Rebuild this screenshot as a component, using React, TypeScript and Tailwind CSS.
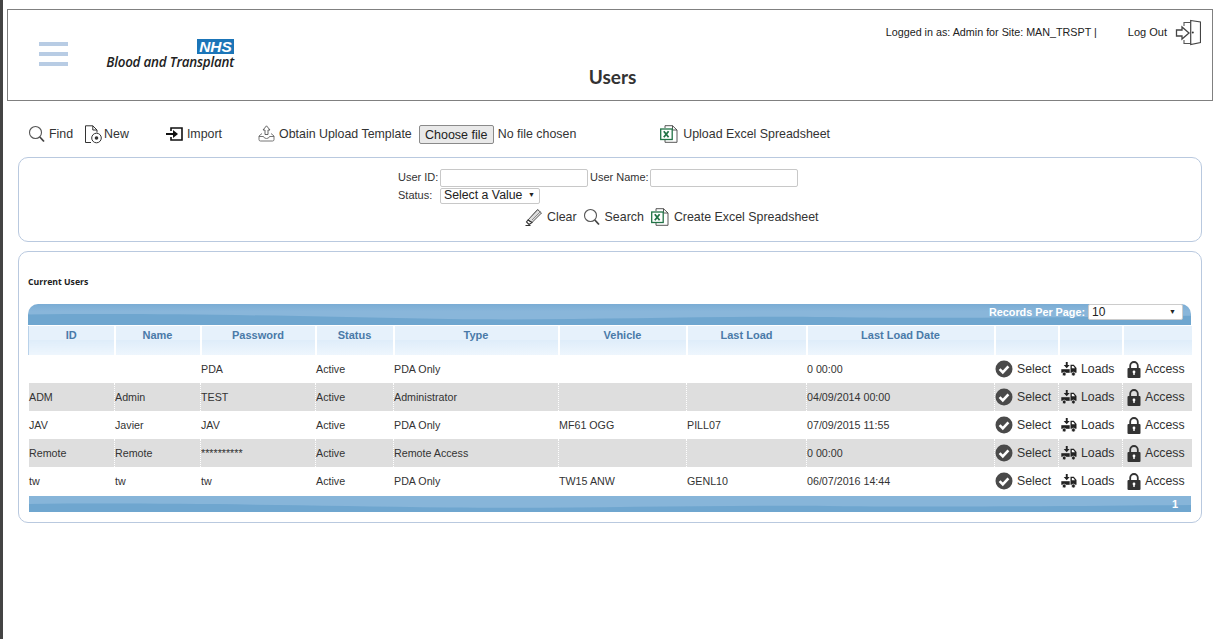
import type { ReactNode } from 'react';

const rows = [
  { id: '', name: '', password: 'PDA', status: 'Active', type: 'PDA Only', vehicle: '', load: '', date: '0 00:00' },
  { id: 'ADM', name: 'Admin', password: 'TEST', status: 'Active', type: 'Administrator', vehicle: '', load: '', date: '04/09/2014 00:00' },
  { id: 'JAV', name: 'Javier', password: 'JAV', status: 'Active', type: 'PDA Only', vehicle: 'MF61 OGG', load: 'PILL07', date: '07/09/2015 11:55' },
  { id: 'Remote', name: 'Remote', password: '**********', status: 'Active', type: 'Remote Access', vehicle: '', load: '', date: '0 00:00' },
  { id: 'tw', name: 'tw', password: 'tw', status: 'Active', type: 'PDA Only', vehicle: 'TW15 ANW', load: 'GENL10', date: '06/07/2016 14:44' },
];

const columns = [
  { label: 'ID', width: 'w-[86px]' },
  { label: 'Name', width: 'w-[86px]' },
  { label: 'Password', width: 'w-[115px]' },
  { label: 'Status', width: 'w-[78px]' },
  { label: 'Type', width: 'w-[165px]' },
  { label: 'Vehicle', width: 'w-[128px]' },
  { label: 'Last Load', width: 'w-[120px]' },
  { label: 'Last Load Date', width: 'w-[188px]' },
  { label: '', width: 'w-[64px]' },
  { label: '', width: 'w-[64px]' },
  { label: '', width: 'w-[69px]' },
];

function SearchIcon() {
  return (
    <svg width="18" height="18" viewBox="0 0 18 18" fill="none" className="shrink-0">
      <circle cx="7.5" cy="7.5" r="6" stroke="#555" strokeWidth="1.1" />
      <path d="M11.8 12 16 16.5" stroke="#444" strokeWidth="1.8" />
    </svg>
  );
}

function NewIcon() {
  return (
    <svg width="19" height="19" viewBox="0 0 19 19" fill="none" className="shrink-0">
      <path d="M7 17.5H1.5V.8h7.3L13 5v2.5M8.8.8V5H13" stroke="#333" strokeWidth="1" />
      <circle cx="12.5" cy="13" r="4.8" fill="#fff" stroke="#333" strokeWidth="1" />
      <circle cx="12.5" cy="13" r="1.8" fill="#333" />
    </svg>
  );
}

function ImportIcon() {
  return (
    <svg width="17" height="14" viewBox="0 0 17 14" fill="none" className="shrink-0">
      <path d="M5 4V1h11v12H5v-3" stroke="#111" strokeWidth="1.6" />
      <path d="M0 7h9" stroke="#111" strokeWidth="2" />
      <path d="M7 3v8l5-4z" fill="#111" />
    </svg>
  );
}

function UploadIcon() {
  return (
    <svg width="17" height="17" viewBox="0 0 17 17" fill="none" className="shrink-0">
      <path d="M8.5.8 12 5h-2v4.5H7V5H5z" stroke="#555" strokeWidth=".9" />
      <path d="M4 8.5 1 11v3.5q0 1.5 1.5 1.5h12q1.5 0 1.5-1.5V11l-3-2.5M1 11.5h4.5q.5 2 3 2t3-2H16" stroke="#666" strokeWidth=".9" />
    </svg>
  );
}

function ExcelIcon() {
  return (
    <svg width="18" height="18" viewBox="0 0 18 18" fill="none" className="shrink-0">
      <path d="M5 3V.7h7.5L17 5v12.3H5V15" stroke="#444" strokeWidth=".9" fill="#fff" />
      <path d="M12.5.7V5H17" stroke="#444" strokeWidth=".9" />
      <rect x=".7" y="4" width="11.5" height="10.5" fill="#fff" stroke="#217346" strokeWidth="1.3" />
      <path d="m3.8 6.3 4.8 6M8.6 6.3l-4.8 6" stroke="#217346" strokeWidth="1.8" />
    </svg>
  );
}

function ClearIcon() {
  return (
    <svg width="18" height="18" viewBox="0 0 18 18" fill="none" className="shrink-0">
      <path d="M3 12 12.5 1.5l4 3.5L7 14.5z" stroke="#555" strokeWidth="1" fill="#ddd" />
      <path d="m5 10 8-8.5M7 12l8.5-8.5" stroke="#777" strokeWidth=".8" />
      <path d="m3 12-1.5 2 2.5 2.5 3-2zM.5 17.5h5" stroke="#333" strokeWidth="1.1" />
    </svg>
  );
}

function LogOutIcon() {
  return (
    <svg width="26" height="27" viewBox="0 0 26 27" fill="none" className="shrink-0">
      <path d="M9 7V3.5h6.7M9 21v3.5h6.7" stroke="#555" strokeWidth="1.1" />
      <path d="M15.7 1.5 25.5 3v20.5l-9.8 2z" stroke="#444" strokeWidth="1.2" fill="#fff" />
      <path d="M1.5 11H7V8l7 6-7 6v-3H1.5z" stroke="#444" strokeWidth="1.3" fill="#fff" />
      <circle cx="17.8" cy="13.5" r="1" fill="#333" />
    </svg>
  );
}

function SelectIcon() {
  return (
    <svg width="18" height="18" viewBox="0 0 18 18" className="shrink-0">
      <circle cx="9" cy="9" r="8.5" fill="#4a4a4a" />
      <path d="m4.6 9.2 3.2 3.2 5.6-6" fill="none" stroke="#fff" strokeWidth="2.6" />
    </svg>
  );
}

function LoadsIcon() {
  return (
    <svg width="16" height="14" viewBox="0 0 16 14" className="shrink-0">
      <path d="M4.8 0h1.9v3h2L5.7 6.2 2.7 3h2.1z" fill="#222" />
      <path d="M.3 7.2h8.4v3.6H.3z" fill="#222" />
      <path d="M9.5 2.8h3.3L15.5 6v4.8h-6z" fill="#222" />
      <path d="M10.8 4h1.5l1.7 2.2h-3.2z" fill="#fff" />
      <circle cx="3.2" cy="12" r="1.9" fill="#222" stroke="#fff" strokeWidth=".6" />
      <circle cx="12.4" cy="12" r="1.9" fill="#222" stroke="#fff" strokeWidth=".6" />
    </svg>
  );
}

function LockIcon() {
  return (
    <svg width="14" height="17" viewBox="0 0 14 17" className="shrink-0">
      <path d="M3.2 8V4.8a3.8 3.8 0 0 1 7.6 0V8" fill="none" stroke="#333" strokeWidth="1.8" />
      <rect x=".5" y="7" width="13" height="10" rx="1" fill="#333" />
      <circle cx="7" cy="11" r="1.4" fill="#fff" />
      <rect x="6.3" y="11" width="1.4" height="3" fill="#fff" />
    </svg>
  );
}

function Wave({ height }: { height: number }) {
  return (
    <svg viewBox={`0 0 1163 ${height}`} preserveAspectRatio="none" className="absolute inset-0 h-full w-full">
      <path
        d={`M0 ${height * 0.5}C120 ${height * 0.42} 250 ${height * 0.55} 420 ${height * 0.72}C560 ${height * 0.8} 660 ${height * 0.55} 800 ${height * 0.62}C950 ${height * 0.72} 1060 ${height * 0.6} 1163 ${height * 0.56}V${height}H0z`}
        fill="#6fa6cf"
      />
    </svg>
  );
}

function ToolLink({ icon, children, className, gap }: { icon: ReactNode; children: ReactNode; className?: string; gap?: string }) {
  return (
    <span className={`flex items-center whitespace-nowrap ${gap ?? 'gap-[4px]'} ${className ?? ''}`}>
      {icon}
      <span>{children}</span>
    </span>
  );
}

function Action({ icon, label }: { icon: ReactNode; label: string }) {
  return (
    <span className="flex items-center gap-[4px] whitespace-nowrap text-[12.3px] text-[#333]">
      {icon}
      {label}
    </span>
  );
}

export default function App() {
  return (
    <div className="flex min-h-[639px] bg-white font-['Liberation_Sans',Arial,sans-serif] text-[#333]">
      <div className="w-[3px] shrink-0 bg-[#444]" />
      <div className="w-[1210px] shrink-0">
        <header className="ml-[4px] mt-[9px] h-[92px] w-[1206px] border border-[#808080]">
          <div className="flex h-[60px] items-start">
            <div className="ml-[31px] mt-[32px] flex w-[29px] flex-col gap-[6px]">
              <div className="h-[4px] bg-[#b8cce4]" />
              <div className="h-[4px] bg-[#b8cce4]" />
              <div className="h-[4px] bg-[#b8cce4]" />
            </div>
            <div className="ml-[38px] mt-[29px] flex w-[128px] flex-col items-end">
              <div className="h-[15px] w-[37px] bg-[#1b75b8] text-center text-[15.5px] font-bold italic leading-[15px] text-white">
                NHS
              </div>
              <div className="mt-[1px] whitespace-nowrap font-['Open_Sans',sans-serif] text-[13.4px] font-semibold italic leading-[14px] tracking-[-0.2px] text-[#222]">
                Blood and Transplant
              </div>
            </div>
            <div className="ml-auto mt-[15px] whitespace-nowrap text-[10.75px] leading-[14px] text-[#222]">
              Logged in as: Admin for Site: MAN_TRSPT |
            </div>
            <div className="ml-[31px] mt-[15px] whitespace-nowrap text-[11px] leading-[14px] text-[#222]">Log Out</div>
            <div className="ml-[8px] mr-[11px] mt-[9px]">
              <LogOutIcon />
            </div>
          </div>
          <h1 className="-mt-[3px] pl-[5px] text-center font-['Lato',sans-serif] text-[19px] font-bold leading-[20px] text-[#333]">
            Users
          </h1>
        </header>

        <div className="mt-[23px] flex h-[20px] items-center pl-[25px] text-[12.4px] text-[#333]">
          <ToolLink icon={<SearchIcon />} gap="gap-[3px]">Find</ToolLink>
          <ToolLink icon={<NewIcon />} className="ml-[11px]" gap="gap-[1px]">New</ToolLink>
          <ToolLink icon={<ImportIcon />} className="ml-[37px]">Import</ToolLink>
          <ToolLink icon={<UploadIcon />} className="ml-[36px]">Obtain Upload Template</ToolLink>
          <button className="ml-[7px] h-[19px] w-[75px] rounded-[2px] border border-[#8a8a8a] bg-[#e9e9e9] text-[12.5px] text-[#222]">
            Choose file
          </button>
          <span className="ml-[4px] whitespace-nowrap">No file chosen</span>
          <ToolLink icon={<ExcelIcon />} className="ml-[84px]" gap="gap-[5px]">Upload Excel Spreadsheet</ToolLink>
        </div>

        <section className="ml-[15px] mt-[13px] flex h-[85px] w-[1184px] flex-col rounded-[10px] border border-[#b9c9df] pl-[379px] pt-[10px] text-[11px]">
          <div className="flex h-[19px] items-center">
            <span className="w-[42px]">User ID:</span>
            <input className="h-[18px] w-[148px] rounded-[2px] border border-[#c8c8c8] bg-white" />
            <span className="ml-[2px] w-[60px] whitespace-nowrap">User Name:</span>
            <input className="h-[18px] w-[148px] rounded-[2px] border border-[#c8c8c8] bg-white" />
          </div>
          <div className="flex h-[17px] items-center">
            <span className="w-[42px]">Status:</span>
            <div className="flex h-[16px] w-[100px] items-center justify-between rounded-[2px] border border-[#c8c8c8] pl-[3px] pr-[4px] text-[12.3px] text-[#222]">
              Select a Value
              <span className="text-[7px]">▼</span>
            </div>
          </div>
          <div className="ml-[127px] mt-[3px] flex h-[20px] items-center whitespace-nowrap text-[12.4px]">
            <ToolLink icon={<ClearIcon />}>Clear</ToolLink>
            <ToolLink icon={<SearchIcon />} className="ml-[6px]">Search</ToolLink>
            <ToolLink icon={<ExcelIcon />} className="ml-[7px]" gap="gap-[5px]">Create Excel Spreadsheet</ToolLink>
          </div>
        </section>

        <section className="ml-[15px] mt-[9px] h-[272px] w-[1184px] rounded-[10px] border border-[#b9c9df] pl-[9px] pt-[24px]">
          <h2 className="font-['Open_Sans',sans-serif] text-[8.7px] font-bold leading-[12px] text-[#222]">Current Users</h2>
          <div className="relative mt-[16px] flex h-[21px] w-[1163px] items-start justify-end overflow-hidden rounded-t-[10px] bg-[linear-gradient(#7aacd4,#89b6da_35%)] pr-[8px]">
            <Wave height={21} />
            <span className="relative mr-[3px] text-[10.8px] font-bold leading-[16px] text-white">Records Per Page:</span>
            <div className="relative flex h-[16px] w-[95px] items-center justify-between rounded-[2px] border border-[#ccc] bg-white pl-[3px] pr-[6px] text-[12px] text-[#222]">
              10
              <span className="text-[7px]">▼</span>
            </div>
          </div>
          <table className="mt-[1px] w-[1163px] table-fixed border-collapse text-[10.7px]">
            <colgroup>
              {columns.map((col, i) => (
                <col key={i} className={col.width} />
              ))}
            </colgroup>
            <thead>
              <tr className="h-[29px]">
                {columns.map((col, i) => (
                  <th
                    key={i}
                    className="border-l-2 border-white bg-[linear-gradient(#e6f1fb_0_50%,#dfedfa_50%,#eef6fd)] pb-[10px] text-center align-middle text-[11px] font-bold text-[#4a7aa8] first:border-l first:border-l-[#b9d2ea]"
                  >
                    {col.label}
                  </th>
                ))}
              </tr>
            </thead>
            <tbody>
              {rows.map((row, i) => {
                const cell = `border-l border-dotted ${i % 2 === 1 ? 'border-white' : 'border-transparent'} pl-0 align-middle`;
                return (
                  <tr key={i} className={`h-[28px] ${i % 2 === 1 ? 'bg-[#dedede]' : ''}`}>
                    <td className={cell}>{row.id}</td>
                    <td className={cell}>{row.name}</td>
                    <td className={cell}>{row.password}</td>
                    <td className={cell}>{row.status}</td>
                    <td className={cell}>{row.type}</td>
                    <td className={cell}>{row.vehicle}</td>
                    <td className={cell}>{row.load}</td>
                    <td className={cell}>{row.date}</td>
                    <td className={cell}>
                      <Action icon={<SelectIcon />} label="Select" />
                    </td>
                    <td className={`${cell} pl-[2px]`}>
                      <Action icon={<LoadsIcon />} label="Loads" />
                    </td>
                    <td className={`${cell} pl-[4px]`}>
                      <Action icon={<LockIcon />} label="Access" />
                    </td>
                  </tr>
                );
              })}
            </tbody>
          </table>
          <div className="relative ml-[1px] mt-[1px] flex h-[16px] w-[1162px] items-center justify-end overflow-hidden bg-[#87b5d9] pr-[13px]">
            <Wave height={16} />
            <span className="relative text-[11px] font-bold text-white">1</span>
          </div>
        </section>
      </div>
    </div>
  );
}
